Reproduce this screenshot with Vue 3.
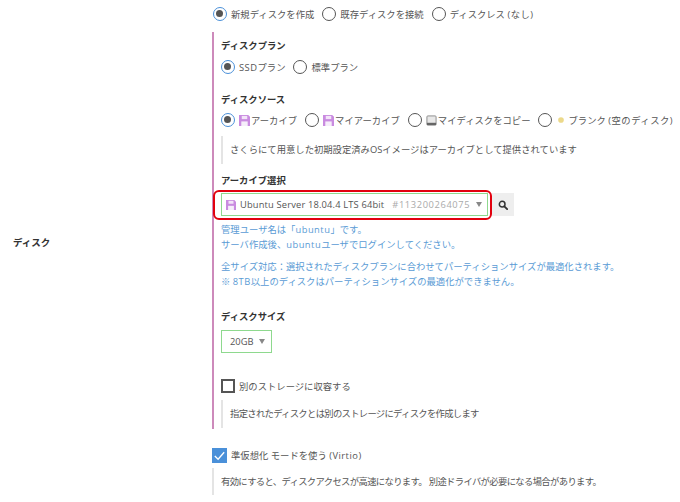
<script setup>
const FloppyPath = 'M0 0h10l2 2v10H0z'
</script>

<template>
  <div class="page">
    <div class="label-col"><span class="row-label">ディスク</span></div>
    <div class="main">
      <div class="radios top">
        <label class="radio on"><i></i>新規ディスクを作成</label>
        <label class="radio"><i></i>既存ディスクを接続</label>
        <label class="radio"><i></i><span>ディスクレス <span class="lat">(なし)</span></span></label>
      </div>

      <div class="group">
        <h4 class="head first">ディスクプラン</h4>
        <div class="radios">
          <label class="radio on"><i></i><span><span class="lat">SSD</span>プラン</span></label>
          <label class="radio"><i></i>標準プラン</label>
        </div>

        <h4 class="head source">ディスクソース</h4>
        <div class="radios">
          <label class="radio on"><i></i>
            <svg class="ico" viewBox="0 0 12 12"><path :d="FloppyPath" fill="#c98be0"/><rect x="3" y="1" width="6" height="3.5" fill="#f3e4f8"/><rect x="2.5" y="7" width="7" height="5" fill="#f6eefa"/></svg>アーカイブ</label>
          <label class="radio"><i></i>
            <svg class="ico" viewBox="0 0 12 12"><path :d="FloppyPath" fill="#c98be0"/><rect x="3" y="1" width="6" height="3.5" fill="#f3e4f8"/><rect x="2.5" y="7" width="7" height="5" fill="#f6eefa"/></svg>マイアーカイブ</label>
          <label class="radio"><i></i>
            <svg class="ico" viewBox="0 0 12 12"><rect x="1" y="1" width="10" height="10" rx="1" fill="#e8e8e8" stroke="#888" stroke-width="1"/><rect x="1" y="8.5" width="10" height="2.5" fill="#666"/></svg>マイディスクをコピー</label>
          <label class="radio"><i></i>
            <svg class="ico blank" viewBox="0 0 12 12"><circle cx="6" cy="6" r="3.4" fill="#ecd98a"/></svg><span>ブランク <span class="lat">(空のディスク)</span></span></label>
        </div>
        <p class="note source-note">さくらにて用意した初期設定済みOSイメージはアーカイブとして提供されています</p>

        <h4 class="head archive">アーカイブ選択</h4>
        <div class="select-row">
          <div class="select wide">
            <svg class="ico sel" viewBox="0 0 12 12"><path :d="FloppyPath" fill="#c98be0"/><rect x="3" y="1" width="6" height="3.5" fill="#f3e4f8"/><rect x="2.5" y="7" width="7" height="5" fill="#f6eefa"/></svg>
            <span>Ubuntu Server 18.04.4 LTS 64bit</span>
            <span class="id">#113200264075</span>
            <span class="caret"></span>
          </div>
          <button class="search">
            <svg viewBox="0 0 12 12" width="10" height="10"><circle cx="5" cy="5" r="3.4" fill="none" stroke="#333" stroke-width="1.8"/><path d="M7.6 7.6 11 11" stroke="#333" stroke-width="2.2" stroke-linecap="round"/></svg>
          </button>
          <div class="highlight"></div>
        </div>
        <p class="info user">管理ユーザ名は「<span class="lat">ubuntu</span>」です。<br>サーバ作成後、<span class="lat">ubuntu</span>ユーザでログインしてください。</p>
        <p class="info size">全サイズ対応：選択されたディスクプランに合わせてパーティションサイズが最適化されます。<br>※ <span class="lat">8TB</span>以上のディスクはパーティションサイズの最適化ができません。</p>

        <h4 class="head disksize">ディスクサイズ</h4>
        <div class="select small"><span>20GB</span><span class="caret"></span></div>

        <label class="check other"><i></i>別のストレージに収容する</label>
        <p class="note other-note">指定されたディスクとは別のストレージにディスクを作成します</p>
      </div>

      <label class="check virtio"><i class="on"><svg viewBox="0 0 16 16"><path d="M3 8.5 6.5 12 13 4.5" fill="none" stroke="#fff" stroke-width="1.4"/></svg></i><span>準仮想化 モードを使う <span class="lat">(Virtio)</span></span></label>
      <p class="note virtio-note">有効にすると、ディスクアクセスが高速になります。 別途ドライバが必要になる場合があります。</p>
    </div>
  </div>
</template>

<style>
html, body { margin: 0; background: #fff; }
</style>

<style scoped>
.page {
  width: 680px;
  height: 502px;
  overflow: hidden;
  display: flex;
  font-family: "Open Sans", "Noto Sans CJK JP", sans-serif;
  font-size: 9.33px;
  color: #555;
  background: #fff;
}
.label-col { width: 212px; flex: none; display: flex; align-items: center; box-sizing: border-box; height: 484px; }
.row-label { margin-left: 13px; font-weight: 700; color: #333; font-size: 9.5px; }
.main { flex: 1; min-width: 0; }
.lat { letter-spacing: .5px; }
.radios { display: flex; align-items: center; gap: 8px; white-space: nowrap; height: 16px; }
.top { margin-top: 6px; margin-left: 1px; }
.radio { display: flex; align-items: center; }
.radio > i {
  width: 14px; height: 14px; box-sizing: border-box; border: 1.5px solid #555; border-radius: 50%;
  margin-right: 4px; flex: none; position: relative; background: #fff;
}
.radio.on > i { border-color: #4a90d9; }
.radio.on > i::after {
  content: ""; position: absolute; left: 2px; top: 2px; width: 7px; height: 7px; border-radius: 50%; background: #555;
}
.ico { width: 11px; height: 11px; margin-right: 1px; flex: none; }
.ico.blank { margin: 0 2px 0 0; width: 10px; height: 10px; }
.group { margin-top: 10px; border-left: 2px solid #cd8abb; padding-left: 7px; height: 397px; }
.head { margin: 0; font-size: 9.33px; font-weight: 700; color: #333; line-height: 14px; }
.first { padding-top: 7px; margin-bottom: 6px; }
.source { margin-top: 18px; margin-bottom: 5px; }
.note {
  margin: 0; border-left: 2px solid #e4e4e4; padding-left: 7px; height: 28px; line-height: 28px;
  white-space: nowrap; color: #555;
}
.source-note { margin-top: 8px; }
.archive { margin-top: 10px; margin-bottom: 5px; }
.select-row { display: flex; align-items: center; position: relative; height: 23px; }
.highlight {
  position: absolute; left: -8px; top: -3px; width: 279px; height: 30px; box-sizing: border-box;
  border: 2px solid #e2010f; border-radius: 6px;
}
.select {
  display: flex; align-items: center; box-sizing: border-box; border: 1px solid #8ed98e; height: 23px; color: #555; white-space: nowrap;
}
.wide { width: 267px; padding-left: 4px; letter-spacing: .16px; margin-right: 4px; }
.sel { width: 10px; height: 10px; margin-right: 4px; }
.id { color: #aaa; margin-left: 8px; letter-spacing: .6px; }
.caret {
  width: 0; height: 0; border-left: 3px solid transparent; border-right: 3px solid transparent; border-top: 5px solid #888;
  margin-left: 6px;
}
.search {
  width: 22px; height: 23px; padding: 0; border: 0; background: #eee; display: flex; align-items: center; justify-content: center;
}
.info { margin: 0; color: #5a9bd5; line-height: 15px; white-space: nowrap; }
.user { margin-top: 6px; }
.size { margin-top: 7px; }
.disksize { margin-top: 21px; margin-bottom: 6px; }
.small { width: 51px; height: 23px; padding-left: 8px; }
.check { display: flex; align-items: center; white-space: nowrap; }
.check > i {
  width: 14px; height: 14px; box-sizing: border-box; border: 2px solid #555; margin-right: 4px; flex: none; background: #fff;
}
.other { margin-top: 25px; height: 16px; }
.other-note { margin-top: 6px; letter-spacing: -.7px; }
.virtio { margin-top: 18px; height: 16px; }
.check > i.on { border: 0; background: #4a90d9; width: 15px; height: 15px; display: block; }
.check > i.on svg { display: block; width: 15px; height: 15px; }
.virtio-note { margin-top: 5px; padding-left: 7px; height: 27px; line-height: 27px; letter-spacing: -.65px; }
</style>
